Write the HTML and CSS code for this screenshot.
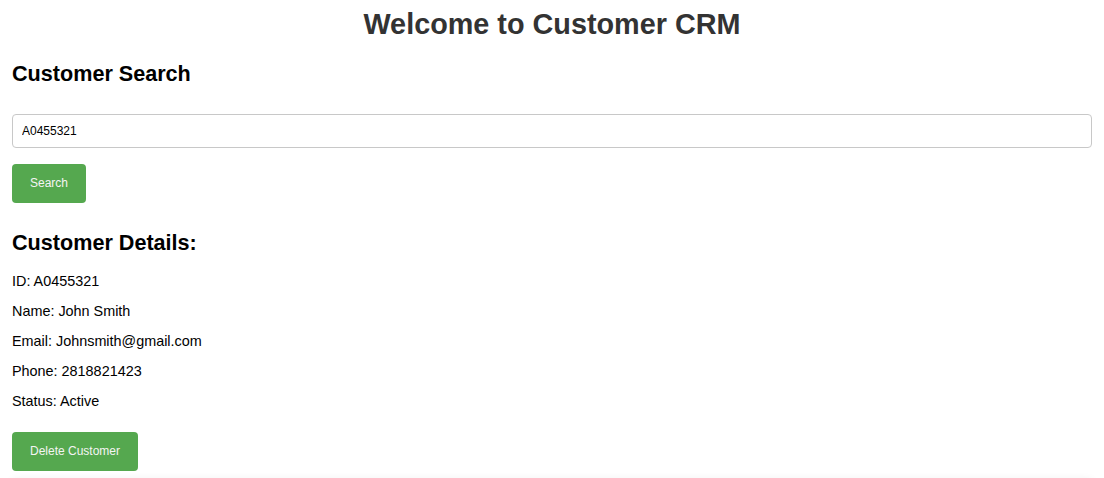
FILE: index.html
```html
<!DOCTYPE html>
<html lang="en">
<head>
<meta charset="utf-8">
<title>Customer CRM</title>
<link rel="stylesheet" href="styles.css">
</head>
<body>
<div class="page">
  <h1 class="title">Welcome to Customer CRM</h1>
  <h2 class="section-title search-title">Customer Search</h2>
  <input class="search-input" type="text" value="A0455321">
  <button class="btn search-btn">Search</button>
  <h2 class="section-title details-title">Customer Details:</h2>
  <div class="details">
    <p class="detail">ID: A0455321</p>
    <p class="detail">Name: John Smith</p>
    <p class="detail">Email: Johnsmith@gmail.com</p>
    <p class="detail">Phone: 2818821423</p>
    <p class="detail">Status: Active</p>
  </div>
  <button class="btn delete-btn">Delete Customer</button>
  <div class="panel"></div>
</div>
</body>
</html>
```

FILE: styles.css
```css
html, body {
  margin: 0;
  padding: 0;
  background: #fff;
}
body {
  font-family: "Liberation Sans", Arial, sans-serif;
  color: #000;
}
.page {
  padding: 0 12px;
  display: flex;
  flex-direction: column;
  align-items: flex-start;
}
.title {
  align-self: stretch;
  text-align: center;
  font-size: 28.8px;
  line-height: 33px;
  font-weight: bold;
  color: #333;
  margin: 8px 0 0;
}
.section-title {
  font-size: 21.6px;
  line-height: 25px;
  font-weight: bold;
  margin: 0;
}
.search-title {
  margin-top: 20px;
}
.search-input {
  align-self: stretch;
  box-sizing: border-box;
  margin-top: 28px;
  height: 34px;
  padding: 0 9px;
  font-family: "Liberation Sans", Arial, sans-serif;
  font-size: 12px;
  color: #000;
  border: 1px solid #c8c8c8;
  border-radius: 4px;
  background: #fff;
  outline: none;
}
.btn {
  border: none;
  border-radius: 4px;
  background: #55a84f;
  color: #f4f4f4;
  font-family: "Liberation Sans", Arial, sans-serif;
  font-size: 12px;
  line-height: 15px;
  padding: 12px 18px;
  cursor: pointer;
}
.search-btn {
  margin-top: 16px;
}
.details-title {
  margin-top: 27px;
}
.details {
  margin-top: 4px;
}
.detail {
  font-size: 14.4px;
  line-height: 16.5px;
  margin: 13.5px 0;
}
.delete-btn {
  margin-top: 9px;
}
.panel {
  align-self: stretch;
  height: 60px;
  margin-top: 10px;
  background: #fff;
  box-shadow: 0 0 10px rgba(0, 0, 0, 0.1);
  border-radius: 4px;
}
```
